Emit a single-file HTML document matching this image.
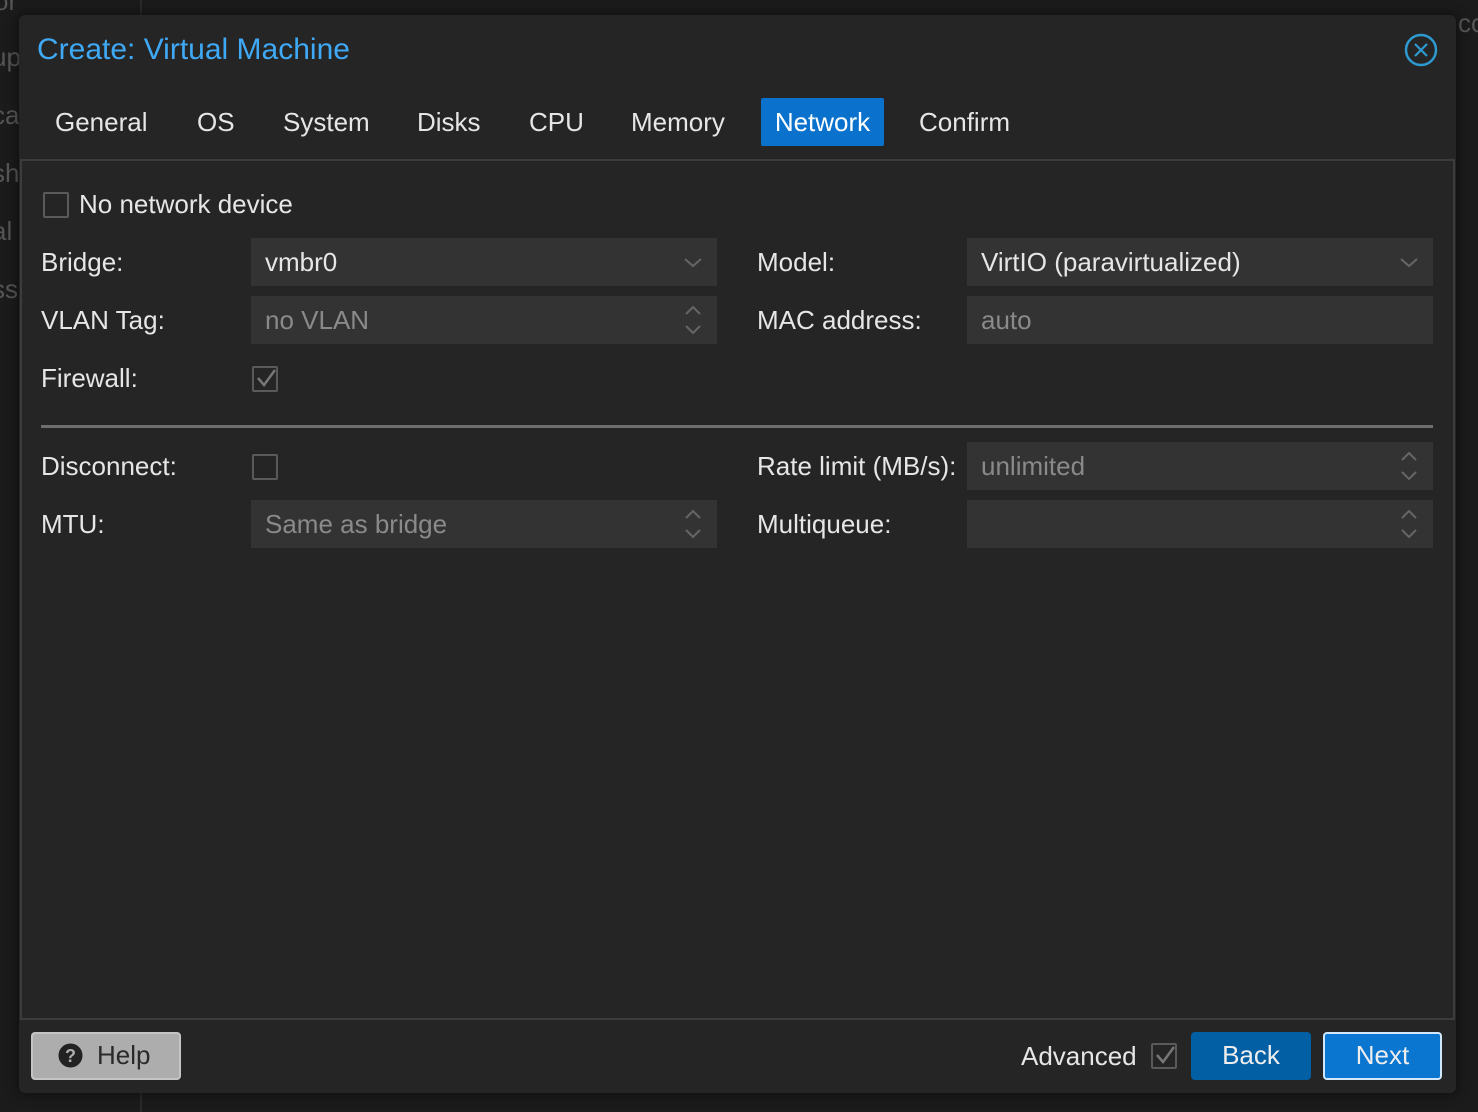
<!DOCTYPE html>
<html><head><meta charset="utf-8"><style>
*{margin:0;padding:0;box-sizing:border-box}
body{width:1478px;height:1112px;background:#1b1b1b;font-family:"Liberation Sans",Arial,sans-serif;position:relative;overflow:hidden;color:#e6e6e6}
.a{position:absolute;white-space:nowrap}
.bgt{color:#555;font-size:26px}
.dlg{position:absolute;left:19px;top:15px;width:1437px;height:1078px;background:#252525;border-radius:6px;box-shadow:0 0 12px rgba(0,0,0,.6)}
.lbl{font-size:26px;color:#e6e6e6;line-height:30px}
.fld{position:absolute;height:48px;background:#333;font-size:26px;line-height:48px;padding-left:14px}
.ph{color:#8a8a8a}
.cb{position:absolute;width:26px;height:26px;border:2px solid #5a5a5a;border-radius:2px}
.tab{position:absolute;top:83px;height:48px;line-height:48px;font-size:26px;color:#e6e6e6}
</style></head><body>
<div class="a bgt" style="left:-6px;top:-14px">or</div>
<div class="a bgt" style="left:-8px;top:42px">up</div>
<div class="a bgt" style="left:-8px;top:100px">ca</div>
<div class="a bgt" style="left:-8px;top:158px">sh</div>
<div class="a bgt" style="left:-8px;top:216px">al</div>
<div class="a bgt" style="left:-8px;top:274px">ss</div>
<div class="a bgt" style="left:1458px;top:8px">co</div>
<div class="a" style="left:140px;top:0;width:2px;height:15px;background:#2a2a2a"></div>
<div class="a" style="left:140px;top:1093px;width:2px;height:19px;background:#2a2a2a"></div>

<div class="dlg">
  <div class="a" style="left:18px;top:18px;font-size:30px;color:#3fa9f5">Create: Virtual Machine</div>
  <svg class="a" style="left:1385px;top:18px" width="34" height="34" viewBox="0 0 34 34"><circle cx="17" cy="17" r="15" fill="none" stroke="#2d9ad0" stroke-width="2.5"/><path d="M11 11L23 23M23 11L11 23" stroke="#2d9ad0" stroke-width="2.2"/></svg>

  <div class="tab" style="left:36px">General</div>
  <div class="tab" style="left:178px">OS</div>
  <div class="tab" style="left:264px">System</div>
  <div class="tab" style="left:398px">Disks</div>
  <div class="tab" style="left:510px">CPU</div>
  <div class="tab" style="left:612px">Memory</div>
  <div class="tab" style="left:742px;width:123px;background:#0a72cc;color:#fff;text-align:center;border-radius:2px">Network</div>
  <div class="tab" style="left:900px">Confirm</div>

  <div class="a" style="left:1px;top:144px;width:1435px;height:861px;border:2px solid #3c3c3c"></div>

  <div class="cb" style="left:24px;top:177px"></div>
  <div class="a lbl" style="left:60px;top:174px">No network device</div>

  <div class="a lbl" style="left:22px;top:232px">Bridge:</div>
  <div class="fld" style="left:232px;top:223px;width:466px">vmbr0</div>
  <div class="a lbl" style="left:22px;top:290px">VLAN Tag:</div>
  <div class="fld ph" style="left:232px;top:281px;width:466px">no VLAN</div>
  <div class="a lbl" style="left:22px;top:348px">Firewall:</div>
  <div class="cb" style="left:233px;top:351px"></div>
  <svg class="a" style="left:236px;top:352px" width="22" height="22"><path d="M3 11L9 18L20 3" fill="none" stroke="#777" stroke-width="2.5"/></svg>

  <div class="a lbl" style="left:738px;top:232px">Model:</div>
  <div class="fld" style="left:948px;top:223px;width:466px">VirtIO (paravirtualized)</div>
  <div class="a lbl" style="left:738px;top:290px">MAC address:</div>
  <div class="fld ph" style="left:948px;top:281px;width:466px">auto</div>

  <div class="a" style="left:22px;top:410px;width:1392px;height:3px;background:#6e6e6e"></div>

  <div class="a lbl" style="left:22px;top:436px">Disconnect:</div>
  <div class="cb" style="left:233px;top:439px"></div>
  <div class="a lbl" style="left:22px;top:494px">MTU:</div>
  <div class="fld ph" style="left:232px;top:485px;width:466px">Same as bridge</div>
  <div class="a lbl" style="left:738px;top:436px">Rate limit (MB/s):</div>
  <div class="fld ph" style="left:948px;top:427px;width:466px">unlimited</div>
  <div class="a lbl" style="left:738px;top:494px">Multiqueue:</div>
  <div class="fld" style="left:948px;top:485px;width:466px"></div>

  <svg class="a" style="left:662px;top:238px" width="24" height="20"><path d="M4 6L12 13L20 6" fill="none" stroke="#666" stroke-width="2"/></svg>
  <svg class="a" style="left:1378px;top:238px" width="24" height="20"><path d="M4 6L12 13L20 6" fill="none" stroke="#666" stroke-width="2"/></svg>
  <svg class="a" style="left:662px;top:288px" width="24" height="34"><path d="M5 11L12 4L19 11M5 23L12 30L19 23" fill="none" stroke="#666" stroke-width="2"/></svg>
  <svg class="a" style="left:662px;top:492px" width="24" height="34"><path d="M5 11L12 4L19 11M5 23L12 30L19 23" fill="none" stroke="#666" stroke-width="2"/></svg>
  <svg class="a" style="left:1378px;top:434px" width="24" height="34"><path d="M5 11L12 4L19 11M5 23L12 30L19 23" fill="none" stroke="#666" stroke-width="2"/></svg>
  <svg class="a" style="left:1378px;top:492px" width="24" height="34"><path d="M5 11L12 4L19 11M5 23L12 30L19 23" fill="none" stroke="#666" stroke-width="2"/></svg>

  <div class="a" style="left:12px;top:1017px;width:150px;height:48px;background:#adadad;border:2px solid #c4c4c4;border-radius:4px"></div>
  <svg class="a" style="left:39px;top:1028px" width="25" height="25"><circle cx="12.5" cy="12.5" r="12" fill="#222"/><text x="12.5" y="19" text-anchor="middle" font-family="Liberation Sans" font-weight="bold" font-size="18" fill="#adadad">?</text></svg>
  <div class="a" style="left:78px;top:1025px;font-size:26px;color:#2a2a2a">Help</div>

  <div class="a lbl" style="left:1002px;top:1026px">Advanced</div>
  <div class="cb" style="left:1132px;top:1028px"></div>
  <svg class="a" style="left:1135px;top:1029px" width="22" height="22"><path d="M3 11L9 18L20 3" fill="none" stroke="#777" stroke-width="2.5"/></svg>
  <div class="a" style="left:1172px;top:1017px;width:120px;height:48px;background:#035fa3;border-radius:4px;font-size:26px;line-height:46px;text-align:center;color:#eee">Back</div>
  <div class="a" style="left:1304px;top:1017px;width:119px;height:48px;background:#0a76d0;border:2px solid #cfe6fb;border-radius:4px;font-size:26px;line-height:42px;text-align:center;color:#eee">Next</div>
</div>
</body></html>
